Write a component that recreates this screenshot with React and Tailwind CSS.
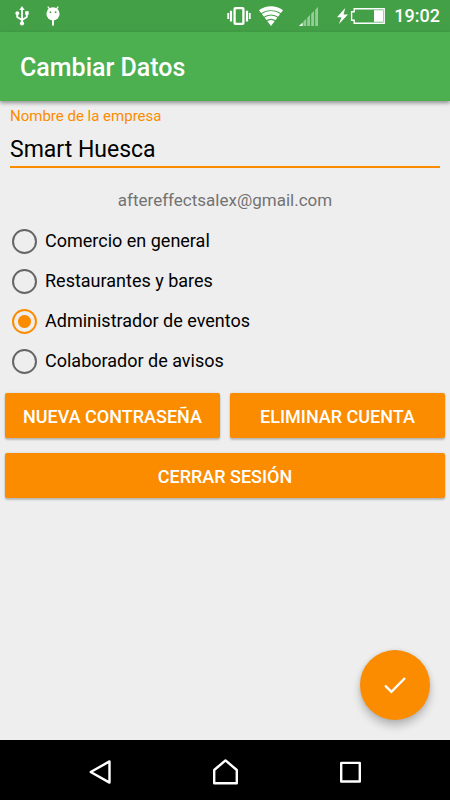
import React, { useState } from 'react';

const accountTypes = [
  { id: 'comercio', label: 'Comercio en general' },
  { id: 'restaurante', label: 'Restaurantes y bares' },
  { id: 'eventos', label: 'Administrador de eventos' },
  { id: 'avisos', label: 'Colaborador de avisos' },
];

const UsbIcon = () => (
  <svg width="14" height="20" viewBox="0 0 14 20" fill="none" stroke="white" strokeWidth="1.8">
    <path d="M7 3v14M2.2 8v3L7 14M11.8 8v3L7 14" />
    <path d="M7 0l2.6 4H4.4z" fill="white" stroke="none" />
    <circle cx="7" cy="17.4" r="2.1" fill="white" stroke="none" />
    <circle cx="2.3" cy="7.2" r="1.9" fill="white" stroke="none" />
    <path d="M10.2 5.2h3.5v3.6h-3.5z" fill="white" stroke="none" />
  </svg>
);

const DebugIcon = () => (
  <svg width="14" height="20" viewBox="0 0 14 20">
    <path d="M1.8 0.6l2.2 3M12.2 0.6l-2.2 3" stroke="white" strokeWidth="1.3" />
    <circle cx="7" cy="7.8" r="6.6" fill="white" />
    <rect x="6" y="14.2" width="2" height="5.4" fill="white" />
    <circle cx="4.4" cy="6.2" r="0.9" fill="#43a047" />
    <circle cx="9.6" cy="6.2" r="0.9" fill="#43a047" />
  </svg>
);

const VibrateIcon = () => (
  <svg width="24" height="18" viewBox="0 0 24 18" fill="none" stroke="white">
    <rect x="7.6" y="1.2" width="8.8" height="15.6" rx="0.8" strokeWidth="2.3" />
    <path d="M4 3.8v10.6M20 3.8v10.6" strokeWidth="2.2" />
    <path d="M1.2 6v6M22.8 6v6" strokeWidth="1.8" />
  </svg>
);

const WifiIcon = () => (
  <svg width="24" height="20" viewBox="0 0 24 20">
    <path d="M12 20L0 4.2C7 -1.2 17 -1.2 24 4.2z" fill="white" />
    <path d="M1.5 8C8 3.6 16 3.6 22.5 8M4.2 11.8C9 8.4 15 8.4 19.8 11.8M7 15c3-2 7-2 10 0" fill="none" stroke="#43a047" strokeWidth="1.1" />
  </svg>
);

const SignalIcon = () => (
  <svg width="20" height="19" viewBox="0 0 20 19" fill="white">
    <path d="M0 19l3.6-3.6V19z" />
    <g fillOpacity="0.45">
      <path d="M4.4 14.6l2.8-2.8V19H4.4z" />
      <path d="M8.2 10.8L11 8v11H8.2z" />
      <path d="M12.2 6.8L15 4v15h-2.8z" />
      <path d="M16.2 2.8L19 0v19h-2.8z" />
    </g>
  </svg>
);

const BatteryIcon = () => (
  <svg width="48" height="16" viewBox="0 0 48 16">
    <path d="M8.2 0L0 9.2h4.4L2 16 11 6.6H6.6z" fill="white" />
    <path d="M17.2 0.8h30v14.4h-30v-3h-2.6V3.8h2.6z" fill="none" stroke="white" strokeWidth="1.4" />
    <rect x="37" y="2.2" width="9" height="11.6" fill="white" />
  </svg>
);

const StatusBar = () => (
  <div className="h-8 bg-[#43a047] flex items-center justify-between pl-[15px] pr-2.5">
    <div className="flex items-center gap-[17px]">
      <UsbIcon />
      <DebugIcon />
    </div>
    <div className="flex items-center">
      <VibrateIcon />
      <div className="ml-2"><WifiIcon /></div>
      <div className="ml-4"><SignalIcon /></div>
      <div className="ml-[18px]"><BatteryIcon /></div>
      <span className="ml-[9px] text-lg leading-8 font-medium text-white">19:02</span>
    </div>
  </div>
);

const ActionButton = ({ children }) => (
  <button
    type="button"
    className="flex-1 h-[45px] pt-0.5 rounded-xs bg-[#fb8c00] text-white text-lg font-medium uppercase shadow-[0_2px_2px_rgba(0,0,0,0.2),0_0_2px_rgba(0,0,0,0.15)]"
  >
    {children}
  </button>
);

const NavBar = () => (
  <nav className="h-[60px] bg-black flex items-center justify-center gap-[101px] pt-1">
    <button type="button" aria-label="Atrás">
      <svg width="24" height="26" viewBox="0 0 24 26" fill="none" stroke="white" strokeWidth="2.4" strokeLinejoin="round">
        <path d="M21.5 2.4v21.2L2.7 13z" />
      </svg>
    </button>
    <button type="button" aria-label="Inicio">
      <svg width="26" height="26" viewBox="0 0 26 26" fill="none" stroke="white" strokeWidth="2.4" strokeLinejoin="round">
        <path d="M1.2 11L12.5 1.4 23.8 11v13.2H1.2z" />
      </svg>
    </button>
    <button type="button" aria-label="Recientes">
      <svg width="22" height="22" viewBox="0 0 22 22" fill="none" stroke="white" strokeWidth="2.4" strokeLinejoin="round">
        <rect x="1.2" y="1.9" width="18.6" height="18.6" />
      </svg>
    </button>
  </nav>
);

const App = () => {
  const [company, setCompany] = useState('Smart Huesca');
  const [type, setType] = useState('eventos');

  return (
    <div className="min-h-screen flex flex-col bg-[#eeeeee] font-[Roboto,sans-serif]">
      {/* Header */}
      <StatusBar />
      <header className="h-[69px] bg-[#4caf50] flex items-center px-5 pt-0.5 shadow-[0_2px_4px_rgba(0,0,0,0.4)]">
        <h1 className="text-[25px] font-medium text-white">Cambiar Datos</h1>
      </header>

      {/* Form */}
      <main className="flex-1 flex flex-col">
        <div className="px-2.5 pt-[5px] flex flex-col">
          <label htmlFor="company" className="text-[15px] leading-5 text-[#fb8c00]">Nombre de la empresa</label>
          <input
            id="company"
            type="text"
            className="h-[42px] pt-1.5 border-b-2 border-[#fb8c00] bg-transparent text-[23px] text-black focus:outline-none"
            value={company}
            onChange={(e) => setCompany(e.target.value)}
          />
        </div>

        <p className="mt-5 text-[17px] leading-6 text-center text-[#737373]">aftereffectsalex@gmail.com</p>

        <fieldset className="mt-[9px] px-3">
          {accountTypes.map((item) => (
            <label key={item.id} className="h-10 flex items-center gap-2 text-lg text-black">
              <input
                type="radio"
                name="accountType"
                className="appearance-none size-[25px] shrink-0 rounded-full border-2 border-[#666666] checked:border-[#fb8c00] checked:bg-[radial-gradient(circle,#fb8c00_6px,transparent_7px)]"
                checked={type === item.id}
                onChange={() => setType(item.id)}
              />
              {item.label}
            </label>
          ))}
        </fieldset>

        <div className="mt-3 px-[5px] flex flex-col gap-[15px]">
          <div className="flex gap-2.5">
            <ActionButton>Nueva contraseña</ActionButton>
            <ActionButton>Eliminar cuenta</ActionButton>
          </div>
          <div className="flex">
            <ActionButton>Cerrar sesión</ActionButton>
          </div>
        </div>

        {/* Save button */}
        <div className="mt-auto flex justify-end p-5">
          <button
            type="button"
            aria-label="Guardar"
            className="size-[70px] rounded-full bg-[#fb8c00] flex items-center justify-center shadow-[0_6px_9px_rgba(0,0,0,0.22),0_0_4px_rgba(0,0,0,0.1)]"
          >
            <svg width="24" height="18" viewBox="0 0 24 18" fill="none" stroke="white" strokeWidth="2.4">
              <path d="M2 9.5l6.4 6.3L22 2" />
            </svg>
          </button>
        </div>
      </main>

      <NavBar />
    </div>
  );
};

export default App;
